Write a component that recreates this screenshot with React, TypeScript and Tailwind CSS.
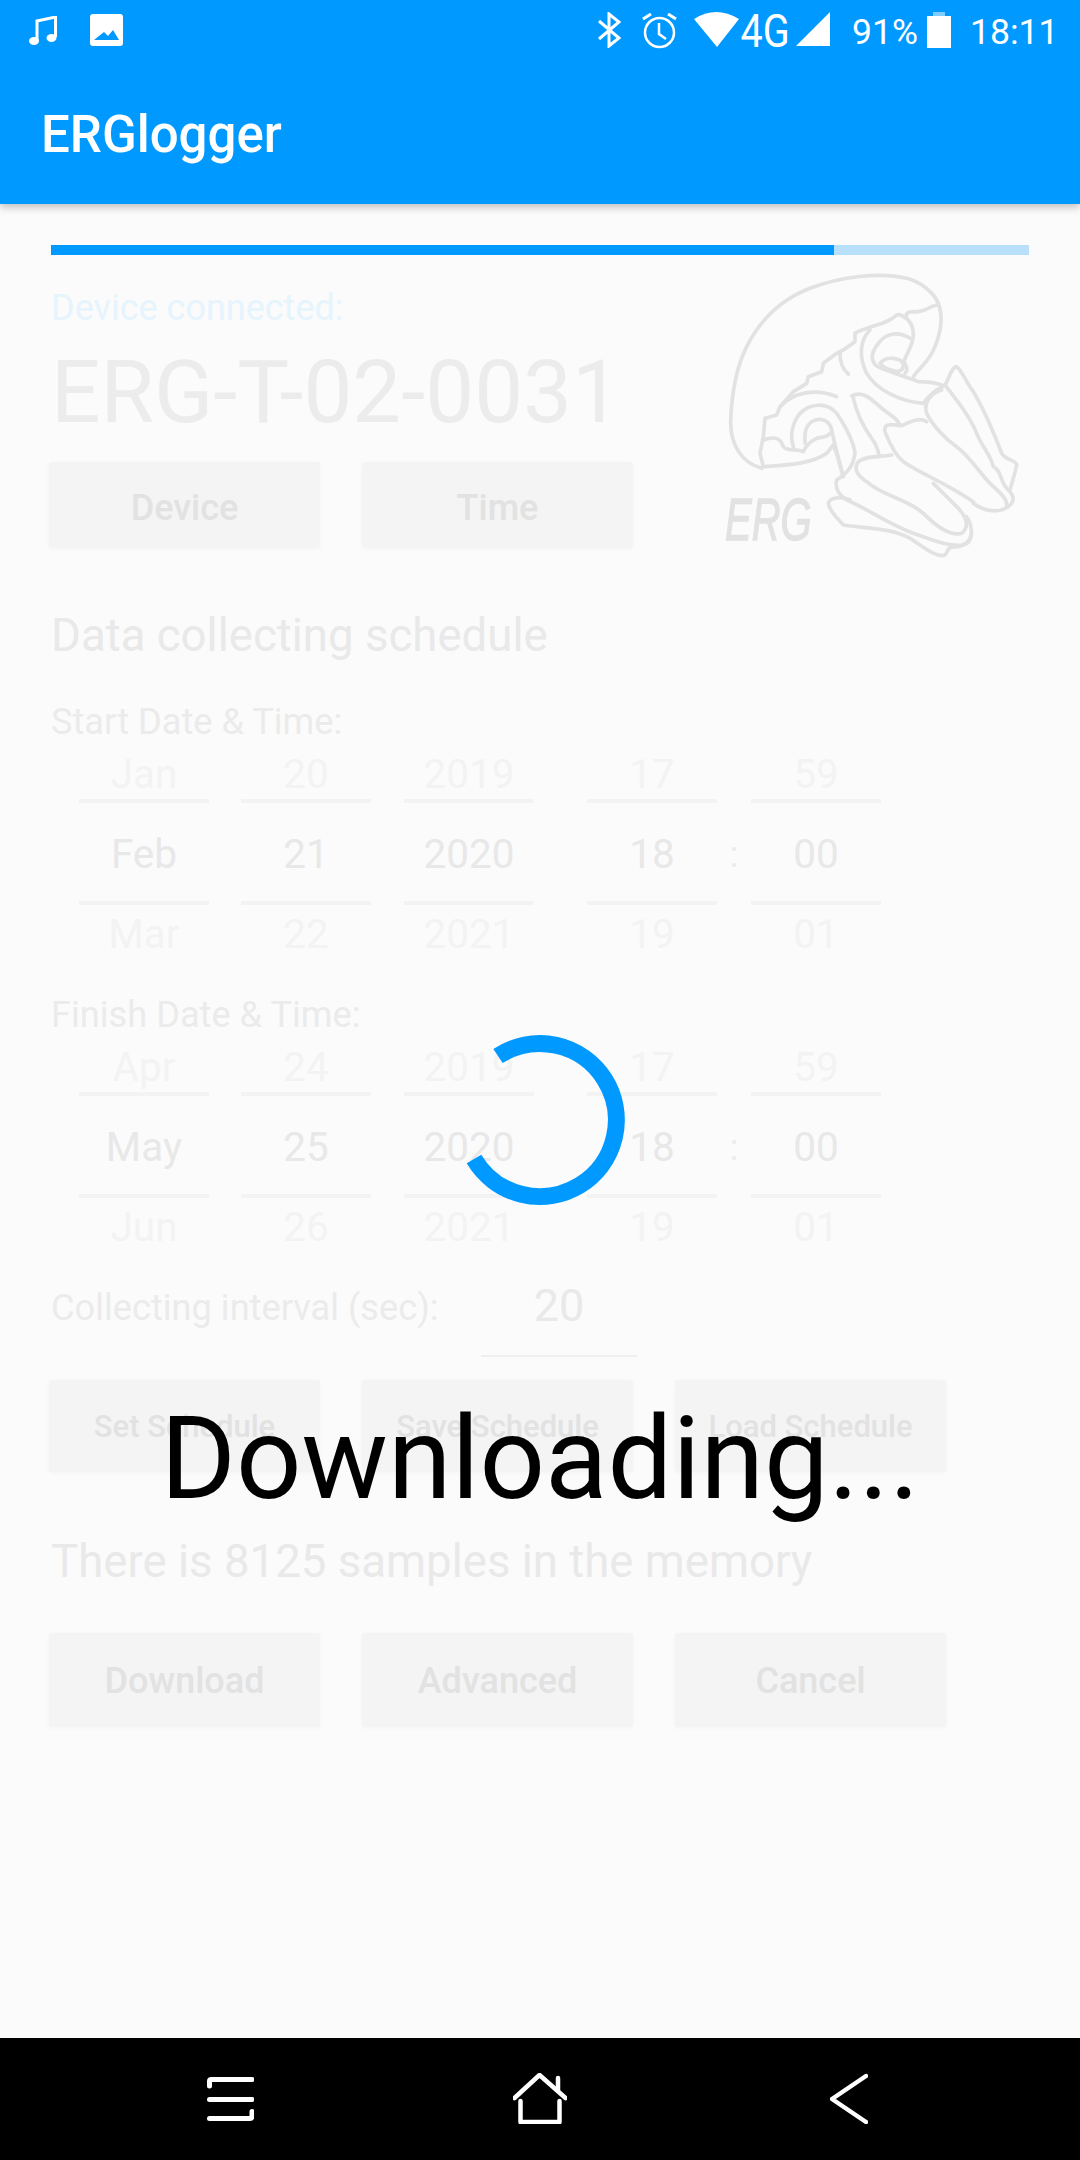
const logoLines = [
  "M775 160 C760 125 720 95 680 85 C600 65 480 80 390 115 C300 150 240 210 200 290 C165 360 155 440 152 510 C150 590 190 640 245 655",
  "M250 650 C330 645 400 640 440 610 L460 585 C475 620 480 650 490 680",
  "M775 160 C790 200 785 240 765 290 C745 340 720 350 700 380",
  "M775 165 C745 165 740 190 700 185 C680 185 675 195 680 205 C700 225 705 250 695 280 C685 310 675 320 672 335 C680 350 685 360 675 370",
  "M525 250 C570 225 620 225 650 195 C665 190 675 205 680 205",
  "M525 250 L525 275 L490 300 L470 310 L430 340 L425 365 L385 380 L380 400 L340 425 L300 470 L290 495 L255 505 L250 560 L240 610 L250 650",
  "M600 340 C620 315 660 325 670 340 C672 360 660 368 640 362 C620 358 608 352 600 340",
  "M690 265 C660 245 620 245 595 280 C575 305 570 330 590 348 C620 365 680 380 715 395 C745 395 770 400 785 405",
  "M570 240 C540 270 535 320 560 370 C590 420 660 455 730 460",
  "M730 460 C750 430 770 420 795 405",
  "M795 405 C805 390 815 350 830 350 C845 360 860 400 880 425 C920 490 945 560 965 610 C975 630 1010 630 1010 645 C1005 670 995 700 990 720",
  "M795 405 C830 450 870 500 890 550 C905 590 930 610 940 650 C965 660 960 700 985 720 C1000 735 1003 745 995 760 C970 790 920 790 880 760",
  "M785 420 C750 430 730 460 740 490 C760 530 800 570 830 590 C870 620 900 670 930 700 C950 720 985 745 980 770",
  "M515 438 C550 420 575 450 600 470 C620 490 650 500 660 525",
  "M520 445 C530 490 550 530 575 565 C590 585 595 600 598 620",
  "M740 515 C720 500 690 515 665 527 C640 525 610 515 615 545 C625 570 640 610 670 635 C720 670 800 700 880 755",
  "M635 615 C600 622 560 615 535 635 C520 655 530 675 560 695 C610 740 680 745 730 790 C770 830 810 860 845 850 C870 830 860 800 830 770 C810 750 780 720 760 700",
  "M860 800 C880 830 880 880 850 885 C800 890 760 870 700 850 C620 820 570 780 500 750 C470 730 465 710 470 690 C500 670 520 650 525 610 C520 570 490 520 470 490 C440 455 390 460 360 490 C335 520 330 560 340 590",
  "M455 540 C450 510 420 500 395 515 C370 535 375 560 375 580",
  "M250 570 C280 560 300 560 310 590 C320 605 350 595 370 605 C380 580 400 570 410 565 C425 560 440 565 450 550",
  "M455 540 C465 590 480 640 490 680",
  "M300 470 C340 425 410 415 470 440",
  "M480 310 C480 340 490 360 505 372",
  "M510 750 C490 740 450 740 445 760 C450 790 480 810 490 825 C560 835 640 835 690 865 C730 890 770 925 795 915 C805 905 800 895 815 890 C840 895 870 880 875 850",
];

const Logo = () => (
  <svg viewBox="0 0 1140 960" className="w-[380px] h-[320px] -mt-[5px] -mb-[22px] -mr-[31px] shrink-0" fill="none">
    {logoLines.map((d) => (
      <path key={d} d={d} stroke="#e2e2e2" strokeWidth="11" strokeLinecap="round" strokeLinejoin="round" />
    ))}
    <text x="135" y="870" fontSize="180" fontStyle="italic" fill="#e2e2e2" stroke="#e2e2e2" strokeWidth="4" fontFamily="Liberation Sans, sans-serif" textLength="260" lengthAdjust="spacingAndGlyphs">
      ERG
    </text>
  </svg>
);

const StatusBar = () => (
  <div className="h-[60px] flex items-start pl-[29px] text-white">
    {/* notification icons */}
    <svg viewBox="0 0 28 30" className="w-[28px] h-[30px] mt-[16px]" fill="none">
      <path d="M8 25 V5 L26.5 1 V21" stroke="#fff" strokeWidth="3" />
      <ellipse cx="5" cy="25" rx="5" ry="4" fill="#fff" />
      <ellipse cx="22.5" cy="22" rx="5" ry="4" fill="#fff" />
    </svg>
    <svg viewBox="0 0 33 32" className="w-[33px] h-[32px] mt-[14px] ml-[33px]">
      <path d="M3 0 H30 Q33 0 33 3 V29 Q33 32 30 32 H3 Q0 32 0 29 V3 Q0 0 3 0 Z M4 26 H29 L23 16 L18 22 L14 18 Z" fill="#fff" fillRule="evenodd" />
    </svg>
    {/* system icons */}
    <svg viewBox="0 0 24 36" className="w-[24px] h-[36px] mt-[12px] ml-[474px]" fill="none">
      <path d="M2 9 L22 26 L12 34 V2 L22 10 L2 27" stroke="#fff" strokeWidth="3" />
    </svg>
    <svg viewBox="0 0 35 36" className="w-[35px] h-[36px] mt-[13px] ml-[21px]" fill="none">
      <circle cx="17.5" cy="19.5" r="14.5" stroke="#fff" strokeWidth="2.5" />
      <path d="M17 10 V21 L24 26" stroke="#fff" strokeWidth="2.5" />
      <path d="M1 6 L9 1 M34 6 L26 1" stroke="#fff" strokeWidth="3" />
    </svg>
    <svg viewBox="0 0 45 35" className="w-[45px] h-[35px] mt-[12px] ml-[17px]">
      <path d="M0 7 Q22 -7 45 7 L23 35 Z" fill="#fff" />
    </svg>
    <div className="w-[46px] ml-[3px] mt-[4px] flex justify-center text-[46px] leading-[54px] scale-x-[0.86]">4G</div>
    <svg viewBox="0 0 34 34" className="w-[34px] h-[34px] mt-[12px] ml-[8px]">
      <path d="M0 34 L34 0 V34 Z" fill="#fff" />
    </svg>
    <div className="w-[66px] ml-[22px] mt-[10px] text-[35.5px] leading-[44px] whitespace-nowrap">91%</div>
    <div className="ml-[9px] mt-[12px] w-[24px] h-[36px] flex flex-col items-center">
      <div className="w-[12px] h-[4px] bg-white/50" />
      <div className="w-[24px] h-[32px] bg-white" />
    </div>
    <div className="ml-[19px] mt-[10px] text-[35.6px] leading-[44px] whitespace-nowrap">18:11</div>
  </div>
);

const Btn = ({ label, className }: { label: string; className: string }) => (
  <div className={`w-[271px] bg-[#f4f4f4] rounded-[3px] shadow-[0_1px_5px_rgba(0,0,0,0.03)] flex items-center justify-center font-medium text-[#e2e2e2] ${className}`}>
    {label}
  </div>
);

const Wheel = ({ top, mid, bottom, ml }: { top: string; mid: string; bottom: string; ml: string }) => (
  <div className={`w-[130px] flex flex-col items-center text-[40.5px] ${ml}`}>
    <div className="h-[56px] w-full flex items-center justify-center text-[#f3f3f3] pt-[6px]">
      <span className="leading-[60px]">{top}</span>
    </div>
    <div className="h-[4px] w-full bg-[#f3f3f3]" />
    <div className="h-[98px] w-full flex items-center justify-center text-[#e8e8e8] pt-[5px]">{mid}</div>
    <div className="h-[4px] w-full bg-[#f3f3f3]" />
    <div className="h-[56px] w-full flex items-center justify-center text-[#f3f3f3] pt-[3px]">{bottom}</div>
  </div>
);

const DateWheels = ({ month, day }: { month: string[]; day: string[] }) => (
  <div className="flex ml-[28px]">
    <Wheel top={month[0]} mid={month[1]} bottom={month[2]} ml="" />
    <Wheel top={day[0]} mid={day[1]} bottom={day[2]} ml="ml-[32px]" />
    <Wheel top="2019" mid="2020" bottom="2021" ml="ml-[33px]" />
    <Wheel top="17" mid="18" bottom="19" ml="ml-[53px]" />
    <div className="w-[34px] flex items-center justify-center text-[36px] text-[#ececec] pt-[6px]">:</div>
    <Wheel top="59" mid="00" bottom="01" ml="" />
  </div>
);

export default function App() {
  return (
    <div className="relative w-[1080px] h-[2160px] flex flex-col bg-[#fbfbfb] overflow-hidden font-['Roboto',sans-serif]">
      {/* App bar */}
      <header className="h-[204px] bg-[#0099ff] shrink-0 shadow-[0_3px_8px_rgba(0,0,0,0.25)] z-10">
        <StatusBar />
        <div className="h-[144px] flex items-center pl-[41px] pt-[7px] text-[51px] font-medium text-white">ERGlogger</div>
      </header>

      <main className="flex-1 px-[51px]">
        <div className="mt-[41px] h-[10px] bg-[#b9e0fb]">
          <div className="h-full w-[783px] bg-[#0099ff]" />
        </div>

        {/* Device */}
        <div className="flex justify-between">
          <div>
            <div className="mt-[31px] text-[36px] leading-[44px] text-[#e6f4fe]">Device connected:</div>
            <div className="mt-[12px] text-[87px] leading-[100px] text-[#ececec] whitespace-nowrap">ERG-T-02-0031</div>
            <div className="mt-[20px] -ml-[2px] flex gap-[42px]">
              <Btn label="Device" className="h-[86px] text-[36px] pt-[5px]" />
              <Btn label="Time" className="h-[86px] text-[36px] pt-[5px]" />
            </div>
          </div>
          <Logo />
        </div>

        {/* Schedule */}
        <div className="mt-[60px] text-[45.6px] leading-[56px] text-[#e9e9e9]">Data collecting schedule</div>
        <div className="mt-[36px] text-[36.2px] leading-[44px] text-[#ebebeb]">Start Date &amp; Time:</div>
        <div className="-mt-[1px]">
          <DateWheels month={["Jan", "Feb", "Mar"]} day={["20", "21", "22"]} />
        </div>
        <div className="mt-[32px] text-[36.2px] leading-[44px] text-[#ebebeb]">Finish Date &amp; Time:</div>
        <div className="-mt-[1px]">
          <DateWheels month={["Apr", "May", "Jun"]} day={["24", "25", "26"]} />
        </div>

        <div className="mt-[24px] flex items-start">
          <div className="w-[430px] mt-[8px] text-[36.2px] leading-[44px] text-[#ebebeb] whitespace-nowrap">Collecting interval (sec):</div>
          <div className="w-[156px] h-[79px] border-b-2 border-[#efefef] text-center text-[45px] leading-[56px] text-[#e9e9e9]">20</div>
        </div>

        <div className="mt-[23px] -ml-[2px] flex gap-[42px]">
          <Btn label="Set Schedule" className="h-[92px] text-[31px] pt-[3px]" />
          <Btn label="Save Schedule" className="h-[92px] text-[31px] pt-[3px]" />
          <Btn label="Load Schedule" className="h-[92px] text-[31px] pt-[3px]" />
        </div>

        <div className="mt-[62px] text-[45.6px] leading-[56px] text-[#e9e9e9]">There is 8125 samples in the memory</div>

        <div className="mt-[43px] -ml-[2px] flex gap-[42px]">
          <Btn label="Download" className="h-[94px] text-[36px] pt-[2px]" />
          <Btn label="Advanced" className="h-[94px] text-[36px] pt-[2px]" />
          <Btn label="Cancel" className="h-[94px] text-[36px] pt-[2px]" />
        </div>
      </main>

      {/* Navigation bar */}
      <nav className="h-[122px] bg-black shrink-0 flex items-start pt-[35px] pl-[207px]">
        <svg viewBox="0 0 47 51" className="w-[47px] h-[51px]" fill="none" stroke="#fff" strokeWidth="5" strokeLinecap="round">
          <path d="M2.5 13 V8 Q2.5 6.5 4.5 6.5 H45" />
          <path d="M2.5 26.5 H45" />
          <path d="M2.5 45.5 H43 Q45 45.5 45 43 V38.5" />
        </svg>
        <svg viewBox="0 0 54 51" className="w-[54px] h-[51px] ml-[259px]" fill="none" stroke="#fff" strokeWidth="4.5" strokeLinecap="round" strokeLinejoin="round">
          <path d="M1.5 25 L26.5 2 L52.5 25" />
          <path d="M45 5 V17" />
          <path d="M7.5 28 V49 H46.5 V28" />
        </svg>
        <svg viewBox="0 0 38 51" className="w-[38px] h-[51px] ml-[263px]" fill="none" stroke="#fff" strokeWidth="4.5" strokeLinecap="round" strokeLinejoin="round">
          <path d="M36 3 L2 26 L36 49" />
        </svg>
      </nav>

      {/* Loading overlay */}
      <div className="absolute inset-0 z-20 flex flex-col items-center pt-[1036px]">
        <svg viewBox="0 0 170 170" className="w-[170px] h-[170px] overflow-visible" fill="none">
          <path d="M43 20 A76.5 76.5 0 1 1 19 123" stroke="#0099ff" strokeWidth="17" />
        </svg>
        <div className="mt-[188px] text-[115px] leading-[130px] text-black whitespace-nowrap">Downloading...</div>
      </div>
    </div>
  );
}
